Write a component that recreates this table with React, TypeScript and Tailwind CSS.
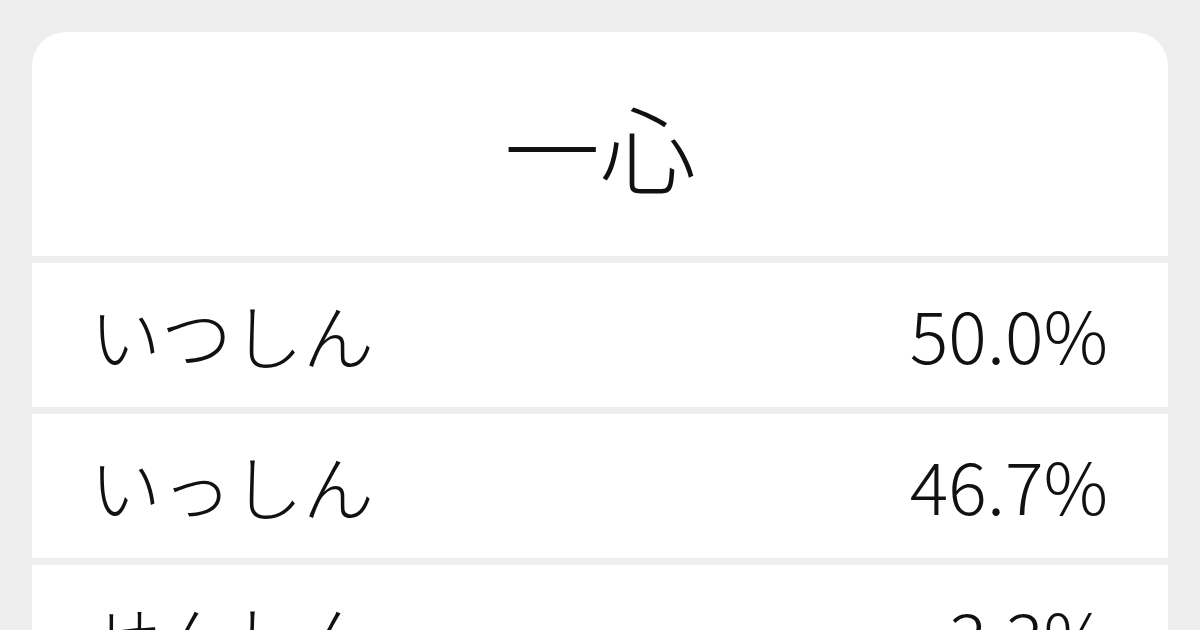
const readings = [
  { kana: 'いつしん', rate: '50.0%' },
  { kana: 'いっしん', rate: '46.7%' },
  { kana: 'せんしん', rate: '3.3%' },
];

export default function App() {
  return (
    <div
      className="w-[1200px] h-[630px] overflow-hidden bg-[#eeeeee] pt-8 px-8 text-[#111111]"
      style={{ fontFamily: '"Noto Sans CJK JP", "Noto Sans", sans-serif' }}
    >
      <div className="flex flex-col gap-[7px] rounded-t-[34px] overflow-hidden">
        <div className="h-[224px] bg-white flex items-center justify-center pt-1">
          <h1 className="text-[96px] leading-none font-light">一心</h1>
        </div>
        {readings.map((r) => (
          <div
            key={r.kana}
            className="h-[144px] shrink-0 bg-white flex items-center justify-between pl-[58px] pr-[60px] pb-1"
          >
            <span className="text-[71px] leading-none font-light">{r.kana}</span>
            <span className="text-[72px] leading-none font-light">{r.rate}</span>
          </div>
        ))}
      </div>
    </div>
  );
}
